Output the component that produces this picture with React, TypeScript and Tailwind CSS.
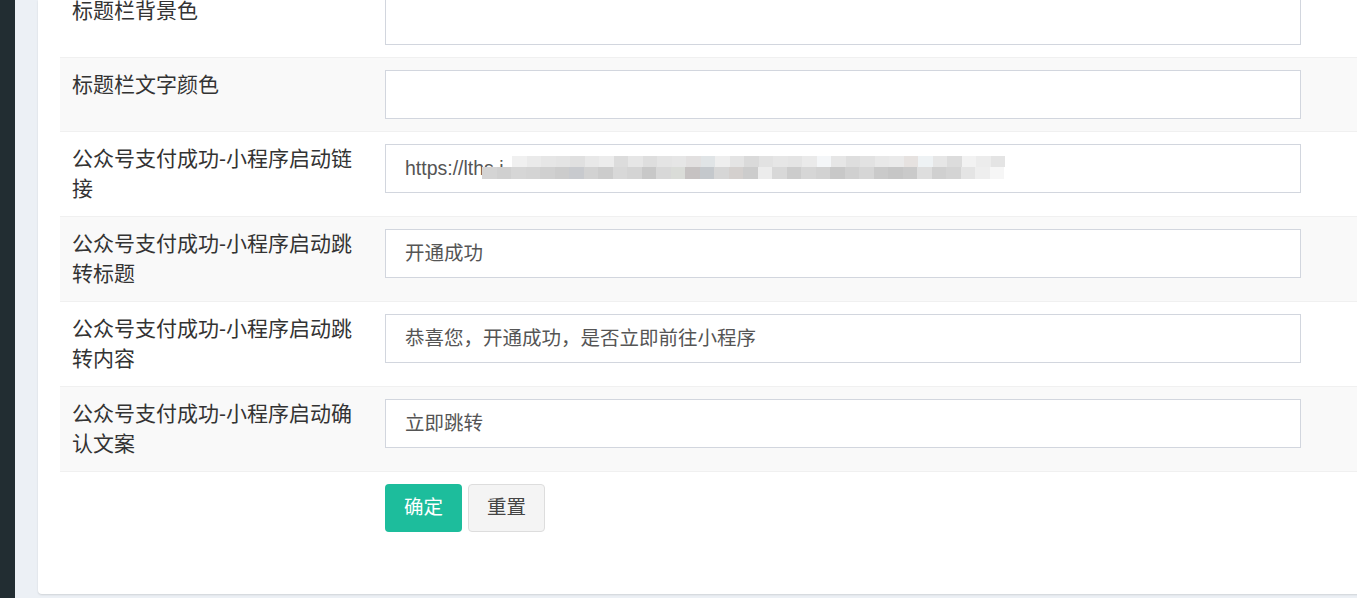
import React from "react";

interface Field {
  label: string;
  value: string;
  mosaic?: boolean;
}

const fields: Field[] = [
  { label: "标题栏背景色", value: "" },
  { label: "标题栏文字颜色", value: "" },
  { label: "公众号支付成功-小程序启动链接", value: "https://lths.i", mosaic: true },
  { label: "公众号支付成功-小程序启动跳转标题", value: "开通成功" },
  { label: "公众号支付成功-小程序启动跳转内容", value: "恭喜您，开通成功，是否立即前往小程序" },
  { label: "公众号支付成功-小程序启动确认文案", value: "立即跳转" },
];

const shadesTop = [
  "#f0f0f0", "#eaeaea", "#e6e6e6", "#e4e4e4", "#e0e0e0", "#e8e8e8", "#ececec", "#dcdcdc",
  "#e6e6e6", "#dedede", "#e4e4e4", "#e6e6e6", "#e2e0e0", "#e0e4e6", "#eeeeee", "#e4e4e4",
  "#dadada", "#e2e2e2", "#e6e6e6", "#e4e4e4", "#eaeaea", "#f4f6f8", "#e6e6e6", "#dedede",
  "#e2e2e2", "#e8e8e8", "#eaeaea", "#e6e2e0", "#eef2f4", "#e6e6e6", "#dcdcdc", "#f2f2f2",
  "#ececec", "#e4e4e4",
];
const shadesBot = [
  "#d4d4d4", "#d0d0d0", "#d6d6d6", "#d4d4d4", "#d0d0d0", "#cccccc", "#c8cace", "#d2d2d2",
  "#cccccc", "#d8d8d8", "#d4d4d4", "#c8c8c8", "#d8d8d8", "#dadcd8", "#c6c2c2", "#c4c8cc",
  "#d6d6d6", "#d4d0ce", "#cccccc", "#ececec", "#d8d8d8", "#cccccc", "#d6d6d6", "#d2d2d2",
  "#c8c8c8", "#d0d0d0", "#d6d6d6", "#cacaca", "#c6c6c6", "#cacaca", "#dedede", "#d0d0d0",
  "#d4d4d4", "#e4e4e4", "#eeeeee", "#f6f6f6",
];

function Mosaic() {
  return (
    <div className="pointer-events-none absolute left-[96px] top-[11px] flex flex-col">
      <div className="ml-[30px] flex h-[11px]">
        {shadesTop.map((c, i) => (
          <div key={i} className="h-full w-[14.5px]" style={{ background: c }} />
        ))}
      </div>
      <div className="flex h-[12px]">
        {shadesBot.map((c, i) => (
          <div key={i} className="h-full w-[14.5px]" style={{ background: c }} />
        ))}
      </div>
    </div>
  );
}

function Row({ f, odd }: { f: Field; odd: boolean }) {
  return (
    <div className={`flex border-t border-[#f0f0f0] ${odd ? "bg-[#f9f9f9]" : "bg-white"}`}>
      <div className="w-[325px] shrink-0 px-[12px] pt-[12px] pb-[12px]">
        <div className="w-[290px] text-[21px] leading-[30px] text-[#333]">{f.label}</div>
      </div>
      <div className="w-[916px] shrink-0 pt-[12px] pb-[12px]">
        <div className="relative flex h-[49px] items-center overflow-hidden border border-[#d2d6de] bg-white px-[19px] text-[19.5px] text-[#555]">
          {f.value}
          {f.mosaic && <Mosaic />}
        </div>
      </div>
    </div>
  );
}

export default function App() {
  return (
    <div
      className="flex h-[598px] w-[1357px] overflow-hidden bg-[#ecf0f5]"
      style={{ fontFamily: '"Liberation Sans", "Noto Sans CJK SC", sans-serif' }}
    >
      <div className="w-[15px] shrink-0 bg-[#222d32]" />
      <div className="ml-[23px] flex h-[594px] w-[1400px] shrink-0 flex-col rounded-bl-[4px] bg-white pl-[22px] shadow-[0_1px_2px_rgba(0,0,0,0.12)]">
        <div className="-mt-[17px] flex flex-col">
          {fields.map((f, i) => (
            <Row key={f.label} f={f} odd={i % 2 === 1} />
          ))}
          <div className="flex border-t border-[#f0f0f0]">
            <div className="w-[325px] shrink-0" />
            <div className="flex gap-[6px] pt-[12px]">
              <button className="h-[48px] w-[77px] rounded-[4px] bg-[#1dbd9c] text-[19.5px] text-white">
                确定
              </button>
              <button className="h-[48px] w-[77px] rounded-[4px] border border-[#dddddd] bg-[#f4f4f4] text-[19.5px] text-[#444]">
                重置
              </button>
            </div>
          </div>
        </div>
      </div>
    </div>
  );
}
